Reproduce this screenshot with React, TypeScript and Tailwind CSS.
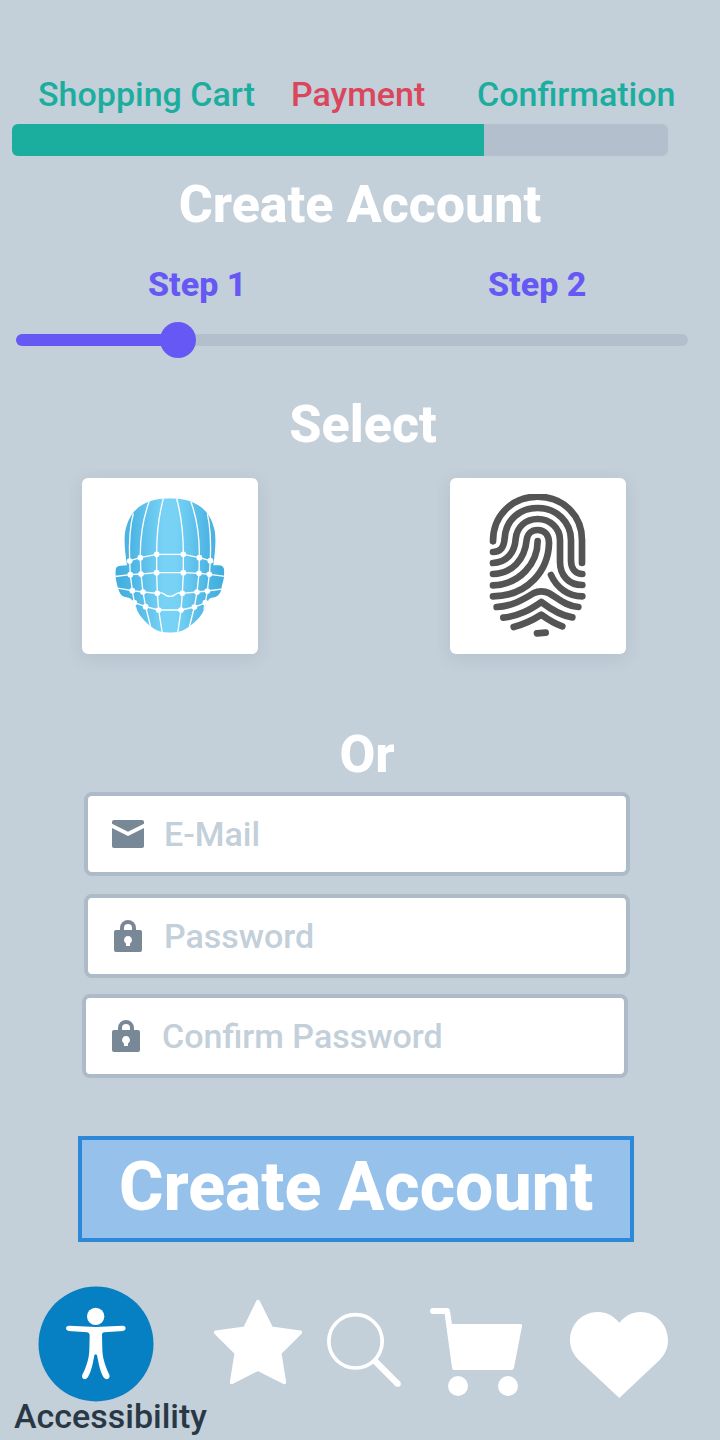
import { useState, type CSSProperties, type ReactNode } from "react";

const STEP_MAX = 106;

function StageBar() {
  return (
    <section aria-label="Checkout progress">
      <ol className="grid grid-cols-[253fr_186fr_243fr] pl-[38px] text-[34px] leading-10 font-medium text-[#1bae9f]">
        <li>Shopping Cart</li>
        <li className="text-[#da465b]">Payment</li>
        <li>Confirmation</li>
      </ol>
      <div className="mt-[10px] mr-[52px] ml-3 h-8 overflow-hidden rounded-md bg-[#b3bfcc]">
        <div className="h-full w-[72%] bg-[#1bae9f]" />
      </div>
    </section>
  );
}

function StepSlider() {
  const [step, setStep] = useState(24);
  const fill: CSSProperties = {
    backgroundImage: `linear-gradient(to right, #6558f5 ${(step / STEP_MAX) * 100}%, #b3bfcc ${(step / STEP_MAX) * 100}%)`,
  };
  return (
    <section className="mt-[29px]">
      <div className="grid grid-cols-[340fr_232fr] pl-[148px] text-[34px] leading-10 font-extrabold text-[#6558f5]">
        <span>Step 1</span>
        <span>Step 2</span>
      </div>
      <div className="mt-[18px] mr-8 ml-4 py-3">
        <input
          type="range"
          aria-label="Account step"
          min={0}
          max={STEP_MAX}
          value={step}
          onChange={(e) => setStep(Number(e.target.value))}
          style={fill}
          className="block h-3 w-full appearance-none rounded-full [&::-webkit-slider-runnable-track]:h-3 [&::-webkit-slider-thumb]:-mt-3 [&::-webkit-slider-thumb]:size-9 [&::-webkit-slider-thumb]:appearance-none [&::-webkit-slider-thumb]:rounded-full [&::-webkit-slider-thumb]:bg-[#6558f5]"
        />
      </div>
    </section>
  );
}

const faceNodes = [
  [179, 288], [211, 278], [260, 268], [340, 268], [388, 278], [421, 287],
  [181, 329], [213, 327], [260, 323], [340, 323], [387, 325], [418, 328],
  [187, 377], [219, 381], [262, 385], [337, 385], [381, 381], [412, 378],
  [193, 413], [227, 425], [266, 435], [333, 435], [373, 426], [406, 413],
];

function FaceIcon() {
  return (
    <svg viewBox="36 39 528 528" className="size-full" aria-hidden="true">
      <defs>
        <linearGradient id="skin" x1="136" x2="463" y1="0" y2="0" gradientUnits="userSpaceOnUse">
          <stop offset="0" stopColor="#40addd" />
          <stop offset="0.17" stopColor="#50b7e5" />
          <stop offset="0.44" stopColor="#77d2f5" />
          <stop offset="0.56" stopColor="#77d2f5" />
          <stop offset="0.83" stopColor="#50b7e5" />
          <stop offset="1" stopColor="#40addd" />
        </linearGradient>
        <clipPath id="head">
          <path d="M171 301C164 258 160 211 169 185C183 132 226 100 300 100C374 100 417 132 431 185C440 211 436 258 430 301H448Q463 301 463 321C463 343 457 355 454 371C451 388 441 397 425 398Q415 399 414 410C407 417 404 424 401 435C394 455 376 471 358 484C340 499 325 503 300 503C275 503 258 498 242 484C224 470 206 451 199 430C196 420 188 413 184 403Q179 398 169 397C149 394 148 378 143 366C139 350 136 338 136 321Q136 302 151 302Z" />
        </clipPath>
      </defs>
      <g clipPath="url(#head)">
        <path fill="url(#skin)" d="M130 95h340v415H130z" />
        <g fill="none" stroke="#fff" strokeWidth="4">
          <path d="M190 145C178 190 177 240 179 288L181 329L187 377L193 413L198 432" />
          <path d="M238 108C219 160 210 220 211 278L213 327L219 381L227 425L242 486" />
          <path d="M281 98C266 150 260 210 260 268V323L262 385L266 435L277 505" />
          <path d="M319 98C334 150 340 210 340 268V323L337 385L333 435L323 505" />
          <path d="M362 108C381 160 389 220 388 278L387 325L381 381L373 426L358 486" />
          <path d="M412 145C422 190 423 240 421 287L418 328L412 378L406 413L402 432" />
          <path d="M170 290L211 278L260 268H340L388 278L431 290" />
          <path d="M130 335L181 329L213 327L260 323H340L387 325L418 328L470 335" />
          <path d="M130 367L187 377L219 381L262 385Q275 381 282 387Q289 394 300 394Q311 394 318 387Q325 381 337 385L381 381L412 378L470 370" />
          <path d="M183 409L227 425L266 435H333L373 426L416 410" />
        </g>
      </g>
      <g fill="#fff">
        {faceNodes.map(([x, y]) => (
          <circle key={`${x}-${y}`} cx={x} cy={y} r="8.5" />
        ))}
      </g>
    </svg>
  );
}

function FingerprintIcon() {
  return (
    <svg viewBox="30 39 528 528" className="size-full" aria-hidden="true">
      <defs>
        <clipPath id="print">
          <path d="M80 87h430v440H80z" />
        </clipPath>
      </defs>
      <g fill="none" stroke="#545454" strokeWidth="20" strokeLinecap="round" strokeLinejoin="round" clipPath="url(#print)">
        <path d="M159 229C159 151 217 95 293 95C369 95 426 151 426 225V294" />
        <path d="M159 261C184 261 192 245 194 220C197 165 239 129 293 129C350 129 393 172 393 225V286C393 312 407 327 427 327" />
        <path d="M159 294C201 292 224 262 227 222C230 185 258 162 293 162C331 162 360 190 360 225V290C360 332 387 360 427 360" />
        <path d="M159 327C216 325 254 285 260 225C262 206 275 195 293 195C315 195 327 210 327 235C325 315 265 392 159 394" />
        <path d="M159 361C240 358 293 295 293 228" />
        <path d="M333 330C350 368 385 394 427 394" />
        <path d="M170 426C216 424 247 405 280 385Q304 373 328 385C360 405 380 423 415 426" />
        <path d="M190 458C238 453 271 434 304 411C334 434 362 452 397 457" />
        <path d="M221 486C255 477 281 464 304 449C325 464 345 476 367 484" />
        <path d="M291 505L317 503" />
      </g>
    </svg>
  );
}

function MethodCard({ label, children }: { label: string; children: ReactNode }) {
  return (
    <button type="button" aria-label={label} className="size-44 rounded-md bg-white shadow-[0_4px_16px_rgba(80,110,135,0.14)]">
      {children}
    </button>
  );
}

function MailIcon() {
  return (
    <svg viewBox="0 0 32 32" className="size-8" fill="#788896" aria-hidden="true">
      <path d="M2 2H30Q32 2 32 4V5.700L16 13.700L0 5.700V4Q0 2 2 2Z" />
      <path d="M0 10L16 18L32 10V28Q32 30 30 30H2Q0 30 0 28Z" />
    </svg>
  );
}

function LockIcon() {
  return (
    <svg viewBox="0 0 32 32" className="size-8" aria-hidden="true">
      <path d="M10 12V8a6 6 0 0 1 12 0v4" fill="none" stroke="#788896" strokeWidth="4" />
      <path d="M4 10H28Q30 10 30 12V30Q30 32 28 32H4Q2 32 2 30V12Q2 10 4 10Z" fill="#788896" />
      <path d="M16 16a4 4 0 0 1 2 7.4V26h-4v-2.6A4 4 0 0 1 16 16Z" fill="#fff" />
    </svg>
  );
}

function Field({ label, type, icon }: { label: string; type: string; icon: ReactNode }) {
  return (
    <label className="flex h-[84px] items-center gap-5 rounded-lg border-4 border-[#adbac7] bg-white px-6">
      {icon}
      <input
        type={type}
        aria-label={label}
        placeholder={label}
        className="h-10 min-w-0 flex-1 bg-transparent text-[34px] leading-10 font-medium text-[#293845] outline-none placeholder:text-[#c3cfd9]"
      />
    </label>
  );
}

function FooterNav() {
  return (
    <nav className="mt-11 grid grid-cols-[214fr_113fr_103fr_140fr_150fr] items-start">
      <a href="#accessibility" className="min-w-0 text-[34px] leading-10 font-medium text-[#293845]">
        <svg viewBox="0 0 348 348" className="ml-[38px] size-[116px]" aria-hidden="true">
          <circle cx="174" cy="174" r="172.5" fill="#0780c3" />
          <g fill="#fff">
            <circle cx="173" cy="91" r="26" />
            <path d="M94 119L173 123L254 119Q263 120 263 127Q263 134 255 135L199 139Q191 140 192 148L193 193C194 222 206 250 214 266Q217 276 208 279Q201 281 196 273C184 252 182 229 177 208Q173 201 169 208C165 229 162 252 150 273Q145 281 138 279Q130 276 133 266C142 250 153 222 154 193L155 148Q155 140 148 139L92 135Q84 134 84 127Q84 119 94 119Z" />
          </g>
        </svg>
        <span className="-mt-[6px] block pl-[14px]">Accessibility</span>
      </a>
      <a href="#favorites" aria-label="Favorites">
        <svg viewBox="642 48 264 348" className="h-[116px] w-[88px]" aria-hidden="true">
          <path
            d="M774 95L814 175L901 187L839 249L853 337L774 297L695 337L709 249L647 187L735 175Z"
            fill="#fff"
            stroke="#fff"
            strokeWidth="11"
            strokeLinejoin="round"
          />
        </svg>
      </a>
      <a href="#search" aria-label="Search">
        <svg viewBox="51 18 222 348" className="h-[116px] w-[74px]" fill="none" stroke="#fff" aria-hidden="true">
          <circle cx="136.5" cy="184" r="80" strokeWidth="11" />
          <path d="M195 243L263 311" strokeWidth="19" />
          <circle cx="263" cy="311" r="5" strokeWidth="9" />
        </svg>
      </a>
      <a href="#cart" aria-label="Cart">
        <svg viewBox="360 18 276 348" className="h-[116px] w-[92px]" fill="#fff" aria-hidden="true">
          <path d="M369 84H411Q419 84 420 93L426 132H631Q637 132 636 139L612 263Q610 270 604 270H433Q426 270 426 263L404 102H369A9 9 0 0 1 369 84Z" />
          <circle cx="444" cy="318" r="30" />
          <circle cx="594" cy="318" r="30" />
        </svg>
      </a>
      <a href="#wishlist" aria-label="Wishlist">
        <svg viewBox="780 18 294 348" className="h-[116px] w-[98px]" fill="#fff" aria-hidden="true">
          <path d="M928 128C910 108 890 96 864 96C815 96 780 134 780 181C780 204 790 224 806 240L928 354L1049 240C1065 224 1074 204 1074 181C1074 134 1038 96 991 96C966 96 946 108 928 128Z" />
        </svg>
      </a>
    </nav>
  );
}

export default function App() {
  return (
    <main className="min-h-screen bg-[#c3cfd9] pt-[74px] pb-1 font-['Roboto',sans-serif]">
      <StageBar />
      <h1 className="mt-[19px] text-center text-[52px] leading-[60px] font-extrabold text-white">Create Account</h1>
      <StepSlider />
      <form onSubmit={(e) => e.preventDefault()}>
        <h2 className="mt-[37px] pl-[6px] text-center text-[52px] leading-[60px] font-extrabold text-white">Select</h2>
        <div className="mt-[23px] flex justify-between pr-[94px] pl-[82px]">
          <MethodCard label="Face recognition">
            <FaceIcon />
          </MethodCard>
          <MethodCard label="Fingerprint">
            <FingerprintIcon />
          </MethodCard>
        </div>
        <h2 className="mt-[71px] pl-[14px] text-center text-[52px] leading-[60px] font-extrabold text-white">Or</h2>
        <div className="mt-[7px] flex flex-col gap-[18px] pr-[90px] pl-[84px]">
          <Field label="E-Mail" type="email" icon={<MailIcon />} />
          <Field label="Password" type="password" icon={<LockIcon />} />
        </div>
        <div className="mt-4 pr-[92px] pl-[82px]">
          <Field label="Confirm Password" type="password" icon={<LockIcon />} />
        </div>
        <div className="mt-[58px] pr-[86px] pl-[78px]">
          <button
            type="submit"
            className="flex h-[106px] w-full items-center justify-center border-4 border-[#2d88d8] bg-[#96c1eb] pb-1 text-[68px] leading-[80px] font-extrabold text-white"
          >
            Create Account
          </button>
        </div>
      </form>
      <FooterNav />
    </main>
  );
}
